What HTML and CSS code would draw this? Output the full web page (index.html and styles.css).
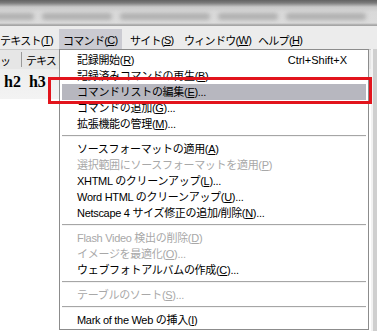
FILE: index.html
```html
<!DOCTYPE html>
<html lang="ja">
<head>
<meta charset="utf-8">
<link rel="stylesheet" href="styles.css">
</head>
<body>
<div class="screen">
  <div class="titlebar">
    <span class="blob b1"></span><span class="blob b2"></span><span class="blob b3"></span><span class="blob b4"></span><span class="blob b5"></span>
  </div>
  <div class="menubar">
    <span class="mb m1">テキスト(<u>T</u>)</span>
    <span class="mb m2 active">コマンド(<u>C</u>)</span>
    <span class="mb m3">サイト(<u>S</u>)</span>
    <span class="mb m4">ウィンドウ(<u>W</u>)</span>
    <span class="mb m5">ヘルプ(<u>H</u>)</span>
  </div>
  <div class="body">
    <div class="content">
      <div class="toolbar1"><span class="tb-cut">ッ</span><i class="tb-sep"></i><span class="tb-text">テキスト</span></div>
      <div class="toolbar2"><b class="hx">h2</b><b class="hx">h3</b></div>
    </div>
    <div class="scroll"></div>
  </div>

  <div class="menu">
    <div class="item"><span>記録開始(<u>R</u>)</span><span class="key">Ctrl+Shift+X</span></div>
    <div class="item"><span>記録済みコマンドの再生(<u>B</u>)</span></div>
    <div class="item hl"><span>コマンドリストの編集(<u>E</u>)...</span></div>
    <div class="item"><span>コマンドの追加(<u>G</u>)...</span></div>
    <div class="item"><span>拡張機能の管理(<u>M</u>)...</span></div>
    <div class="sep"></div>
    <div class="item"><span>ソースフォーマットの適用(<u>A</u>)</span></div>
    <div class="item dis"><span>選択範囲にソースフォーマットを適用(<u>P</u>)</span></div>
    <div class="item"><span>XHTML のクリーンアップ(<u>L</u>)...</span></div>
    <div class="item"><span>Word HTML のクリーンアップ(<u>U</u>)...</span></div>
    <div class="item"><span>Netscape 4 サイズ修正の追加/削除(<u>N</u>)...</span></div>
    <div class="sep"></div>
    <div class="item dis"><span>Flash Video 検出の削除(<u>D</u>)</span></div>
    <div class="item dis"><span>イメージを最適化(<u>O</u>)...</span></div>
    <div class="item"><span>ウェブフォトアルバムの作成(<u>C</u>)...</span></div>
    <div class="sep"></div>
    <div class="item dis"><span>テーブルのソート(<u>S</u>)...</span></div>
    <div class="sep"></div>
    <div class="item"><span>Mark of the Web の挿入(<u>I</u>)</span></div>
  </div>
  <div class="redbox"></div>
</div>
</body>
</html>
```

FILE: styles.css
```css
* { box-sizing: border-box; }
html, body { margin: 0; padding: 0; }
body {
  width: 377px;
  height: 331px;
  overflow: hidden;
  background: #ffffff;
  font-family: "Liberation Sans", "Noto Sans CJK JP", sans-serif;
  font-size: 11px;
  color: #000;
}
.screen {
  position: relative;
  width: 377px;
  height: 331px;
  overflow: hidden;
  display: flex;
  flex-direction: column;
}
u { text-decoration: underline; text-underline-offset: 1px; }

/* blurred title / address area */
.titlebar {
  height: 26px;
  flex: none;
  background: linear-gradient(#626262 0, #7c7c7c 3px, #c9c9c9 7px, #d9d9d9 12px, #dcdcdc 23px, #a6a6a6 25px);
  display: flex;
  align-items: center;
  padding: 6px 0 0 0;
  gap: 8px;
  overflow: hidden;
}
.blob {
  height: 7px;
  background: #b0b0b0;
  filter: blur(2px);
  border-radius: 3px;
}
.b1 { width: 40px; margin-left: -6px; }
.b2 { width: 70px; }
.b3 { width: 90px; }
.b4 { width: 60px; }
.b5 { width: 80px; }

/* menu bar */
.menubar {
  height: 23px;
  flex: none;
  background: #ececec;
  display: flex;
  align-items: stretch;
  font-size: 11px;
}
.mb {
  display: flex;
  align-items: center;
  white-space: nowrap;
  letter-spacing: -0.7px;
  padding-top: 4px;
  flex: none;
}
.m1 { width: 59px; padding-left: 0; }
.m2 { width: 63px; padding-left: 4px; }
.m3 { width: 56px; padding-left: 8px; }
.m4 { width: 74px; padding-left: 6px; }
.m5 { width: 60px; padding-left: 6px; }
.mb.active {
  background: #cbcbd2;
  margin-top: 3px;
  padding-top: 1px;
}

/* body below menubar */
.body {
  flex: 1;
  display: flex;
}
.content {
  flex: 1;
  display: flex;
  flex-direction: column;
}
.toolbar1 {
  height: 20px;
  background: #e6e6e6;
  border-top: 1px solid #c8c8c8;
  display: flex;
  align-items: center;
  font-size: 11px;
  letter-spacing: -1px;
}
.tb-cut { margin-left: 0; width: 18px; }
.tb-sep { width: 1px; height: 15px; background: #9a9a9a; margin: 0 4px 0 3px; }
.toolbar2 {
  height: 30px;
  background: linear-gradient(#eeeeee, #f3f3f3);
  display: flex;
  align-items: center;
  gap: 8px;
  padding: 0 0 4px 4px;
}
.hx {
  font-family: "Liberation Serif", serif;
  font-size: 16px;
  font-weight: bold;
}
.scroll {
  width: 6px;
  background: #cfcfcf;
  border-left: 2px solid #f2f2f2;
}

/* dropdown */
.menu {
  position: absolute;
  left: 59px;
  top: 49px;
  width: 310px;
  background: #ffffff;
  border: 1px solid #8c8c8c;
  padding: 2px 1px 1px 1px;
}
.item {
  height: 16px;
  line-height: 16px;
  margin: 0 1px 0 1px;
  padding: 0 19px 0 15px;
  display: flex;
  justify-content: space-between;
  white-space: nowrap;
  letter-spacing: -0.3px;
}
.item .key { letter-spacing: 0; }
.item.hl { background: #b7b7bf; }
.item.dis { color: #a8a8a8; }
.sep {
  height: 9px;
  margin: 0 1px;
  padding-top: 3px;
}
.sep::before {
  content: "";
  display: block;
  height: 1px;
  background: #a6a6a6;
  border-bottom: 1px solid #f4f4f4;
}

/* annotation */
.redbox {
  position: absolute;
  left: 48px;
  top: 77px;
  width: 324px;
  height: 27px;
  border: 3px solid #e2141c;
}
```
